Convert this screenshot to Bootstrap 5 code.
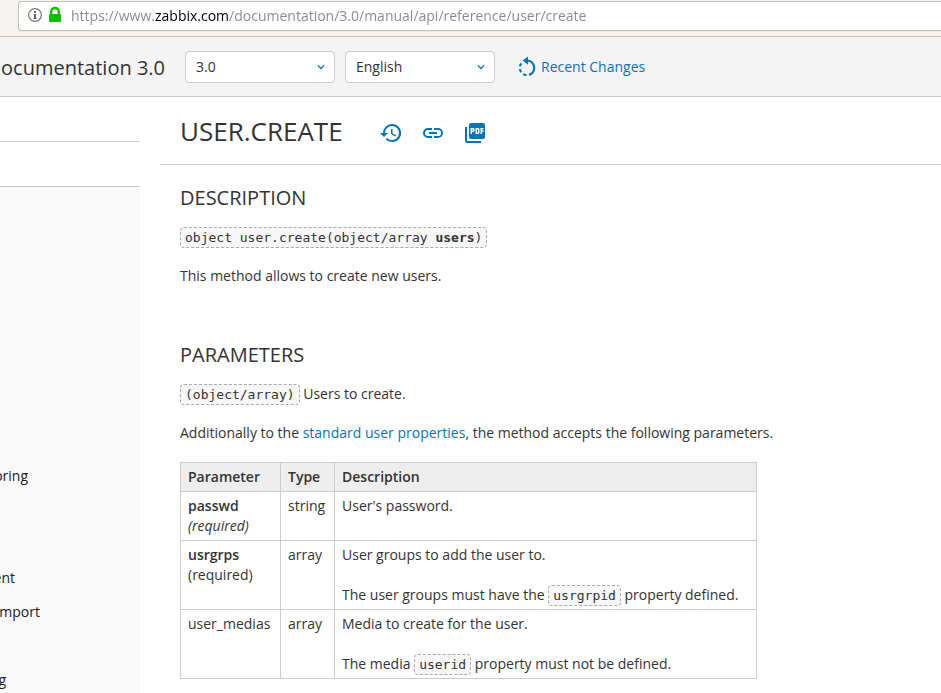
<!DOCTYPE html>
<html lang="en">
<head>
<meta charset="utf-8">
<meta name="viewport" content="width=device-width, initial-scale=1">
<title>user.create</title>
<link href="https://cdn.jsdelivr.net/npm/bootstrap@5.3.0/dist/css/bootstrap.min.css" rel="stylesheet">
<style>
  :root { --zbx-blue: #0275b8; --zbx-line: #ccc; }
  body { font-family: "Open Sans", "Noto Sans", sans-serif; font-size: 14px; line-height: 20px; color: #333; background: #fff; overflow-x: hidden; }
  a { color: var(--zbx-blue); text-decoration: none; }
  a:hover { text-decoration: underline; }

  /* browser address bar */
  .browser-bar { background: #f5f4f2; border-bottom: 1px solid #cbc4bb; padding: 1px 0 5px 18px; }
  .url-box { height: 30px; background: #fff; border: 1px solid #c9c0b7; border-right: 0; border-radius: 4px 0 0 4px; padding: 0 0 2px 9px; box-shadow: 0 1px 2px #e6e3df; }
  .url-input { border: 0; padding: 0; outline: 0; min-width: 0; font-size: 14px; height: 24px;
    color: transparent; background: linear-gradient(90deg, #888 84px, #000 84px, #000 158px, #888 158px); -webkit-background-clip: text; background-clip: text; }

  /* site header */
  .site-header { background: #f4f4f4; border-bottom: 1px solid var(--zbx-line); height: 60px; }
  .site-title { width: 165px; font-size: 20px; line-height: 24px; padding-top: 2px; white-space: nowrap; }
  .pickers { gap: 10px; margin: 0 22px 0 20px; }
  .picker { width: 150px; height: 32px; padding: 0 28px 0 10px; font-size: 14px; color: #333; border-color: #ccc; border-radius: 4px;
    background-image: url("data:image/svg+xml,%3Csvg xmlns='http://www.w3.org/2000/svg' viewBox='0 0 8 8'%3E%3Cpath d='M1 2.5l3 3 3-3' fill='none' stroke='%230275b8' stroke-width='1.3'/%3E%3C/svg%3E");
    background-size: 8px 8px; background-position: right 9px center; }
  .recent { gap: 4px; }

  /* sidebar */
  .side { width: 140px; margin-right: 20px; }
  .side-cell { height: 45px; border-bottom: 1px solid var(--zbx-line); }
  .side-menu { background: #f9f9f9; padding-top: 272px; }
  .side-menu a { color: #1a1a1a; height: 34px; white-space: nowrap; }
  .skip-1 { margin-top: 34px; } .skip-2 { margin-top: 68px; }
  .end-28 { width: 28px; } .end-15 { width: 15px; } .end-40 { width: 40px; } .end-6 { width: 6px; }

  /* article */
  .page-head { height: 68px; border-bottom: 1px solid var(--zbx-line); padding-left: 20px; gap: 36px; }
  h1 { font-size: 26px; line-height: 32px; font-weight: 400; }
  h2 { font-size: 20px; line-height: 26px; font-weight: 400; margin: 0 0 16px; }
  .tools { gap: 18px; }
  .tools svg { display: block; }
  .article { padding: 20px 20px 0; }
  .article p { margin-bottom: 19px; }
  .article section + section { margin-top: 56px; }
  code { font-family: "DejaVu Sans Mono", monospace; font-size: 13px; line-height: 1; color: #333; background: #f7f7f7; border: 1px dashed #aaa; border-radius: 4px; padding: 2px 4px; }
  .params th, .params td { border: 1px solid var(--zbx-line); padding: 4px 7px; vertical-align: top; }
  .params th { background: #eee; font-weight: 600; }
  .params b { font-weight: 600; }
  .col-name { width: 100px; } .col-type { width: 54px; } .col-desc { width: 422px; }
</style>
</head>
<body>
<div class="browser-bar">
  <div class="url-box d-flex align-items-center">
    <svg width="43" height="20" viewBox="0 0 43 20" class="flex-shrink-0" aria-hidden="true">
      <circle cx="7" cy="10" r="6.400" fill="none" stroke="#777" stroke-width="1.200"/>
      <path d="M6 6h2v2H6zM5.500 9H8v4h.7v1H5.300v-1H6v-3h-.5z" fill="#666"/>
      <path d="M23.200 10V6.800a3.800 3.800 0 0 1 7.600 0V10" fill="none" stroke="#12bc00" stroke-width="2.400"/>
      <rect x="21" y="9" width="12" height="8" rx="1" fill="#12bc00"/>
    </svg>
    <input class="url-input flex-grow-1" type="text" aria-label="Address" value="https://www.zabbix.com/documentation/3.0/manual/api/reference/user/create">
  </div>
</div>

<header class="site-header d-flex align-items-center">
  <div class="site-title d-flex justify-content-end overflow-hidden flex-shrink-0">Documentation 3.0</div>
  <div class="pickers d-flex flex-shrink-0">
    <select class="form-select picker" aria-label="Version" id="version"><option>3.0</option></select>
    <select class="form-select picker" aria-label="Language" id="language"><option>English</option></select>
  </div>
  <a href="#" class="recent d-flex align-items-center">
    <svg width="20" height="22" viewBox="0 0 20 22" fill="none" stroke="currentColor" stroke-width="2.200" aria-hidden="true">
      <path d="M10 4.600a7.300 7.300 0 0 1 2 14.300"/>
      <path d="M9.500 19.200a7.300 7.300 0 0 1-3.300-1.100M4.200 16.200a7.300 7.300 0 0 1-1.300-3.100M2.900 10.300a7.300 7.300 0 0 1 1.300-3"/>
      <path d="M11 .5v8.200L5.800 4.600z" fill="currentColor" stroke="none"/>
    </svg>
    <span>Recent Changes</span>
  </a>
</header>

<div class="d-flex">
  <aside class="side flex-shrink-0">
    <div class="side-cell"></div>
    <div class="side-cell"></div>
    <nav class="side-menu" aria-label="Manual">
      <a href="#" class="end-28 d-flex align-items-center justify-content-end overflow-hidden">oring</a>
      <a href="#" class="skip-2 end-15 d-flex align-items-center justify-content-end overflow-hidden">ent</a>
      <a href="#" class="end-40 d-flex align-items-center justify-content-end overflow-hidden">mport</a>
      <a href="#" class="skip-1 end-6 d-flex align-items-center justify-content-end overflow-hidden">g</a>
    </nav>
  </aside>
  <main class="flex-grow-1">
    <div class="page-head d-flex align-items-center">
      <h1 class="m-0">USER.CREATE</h1>
      <div class="tools d-flex align-items-center pt-1">
        <a href="#" aria-label="Old revisions"><svg width="24" height="24" viewBox="0 0 24 24" fill="currentColor"><path d="M13 3a9 9 0 0 0-9 9H1l3.900 3.900.1.100L9 12H6a7 7 0 1 1 7 7c-1.900 0-3.700-.8-4.900-2.100l-1.400 1.400A9 9 0 1 0 13 3zm-1 5v5l4.300 2.500.7-1.200-3.500-2.100V8z"/></svg></a>
        <a href="#" aria-label="Backlinks"><svg width="24" height="24" viewBox="0 0 24 24" fill="currentColor"><path d="M3.900 12c0-1.700 1.400-3.100 3.100-3.100h4V7H7a5 5 0 0 0 0 10h4v-1.900H7c-1.700 0-3.100-1.400-3.100-3.100zM8 13h8v-2H8v2zm9-6h-4v1.900h4a3.100 3.100 0 0 1 0 6.200h-4V17h4a5 5 0 0 0 0-10z"/></svg></a>
        <a href="#" aria-label="Export to PDF"><svg width="24" height="24" viewBox="0 0 24 24" fill="currentColor"><path fill-rule="evenodd" d="M20 2H8a2 2 0 0 0-2 2v12c0 1.100.9 2 2 2h12a2 2 0 0 0 2-2V4a2 2 0 0 0-2-2zm-8.500 7.500c0 .8-.7 1.500-1.500 1.500H9v2H7.500V7H10c.8 0 1.500.7 1.500 1.500v1zm5 2c0 .8-.7 1.500-1.500 1.500h-2.500V7H15c.8 0 1.500.7 1.500 1.500v3zm4-3H19v1h1.500V11H19v2h-1.500V7h3v1.500zM9 9.500h1v-1H9v1zM4 6H2v14a2 2 0 0 0 2 2h14v-2H4V6zm10 5.500h1v-3h-1v3z"/></svg></a>
      </div>
    </div>
    <div class="article">
      <section>
        <h2>DESCRIPTION</h2>
        <p><code>object user.create(object/array <b>users</b>)</code></p>
        <p>This method allows to create new users.</p>
      </section>
      <section>
        <h2>PARAMETERS</h2>
        <p><code>(object/array)</code> Users to create.</p>
        <p>Additionally to the <a href="#">standard user properties</a>, the method accepts the following parameters.</p>
        <table class="params">
          <colgroup><col class="col-name"><col class="col-type"><col class="col-desc"></colgroup>
          <thead><tr><th>Parameter</th><th>Type</th><th>Description</th></tr></thead>
          <tbody>
            <tr><td><b>passwd</b><br><i>(required)</i></td><td>string</td><td>User's password.</td></tr>
            <tr><td><b>usrgrps</b><br>(required)</td><td>array</td><td>User groups to add the user to.<br><br>The user groups must have the <code>usrgrpid</code> property defined.</td></tr>
            <tr><td>user_medias</td><td>array</td><td>Media to create for the user.<br><br>The media <code>userid</code> property must not be defined.</td></tr>
          </tbody>
        </table>
      </section>
    </div>
  </main>
</div>
<script src="https://cdn.jsdelivr.net/npm/bootstrap@5.3.0/dist/js/bootstrap.bundle.min.js"></script>
</body>
</html>
